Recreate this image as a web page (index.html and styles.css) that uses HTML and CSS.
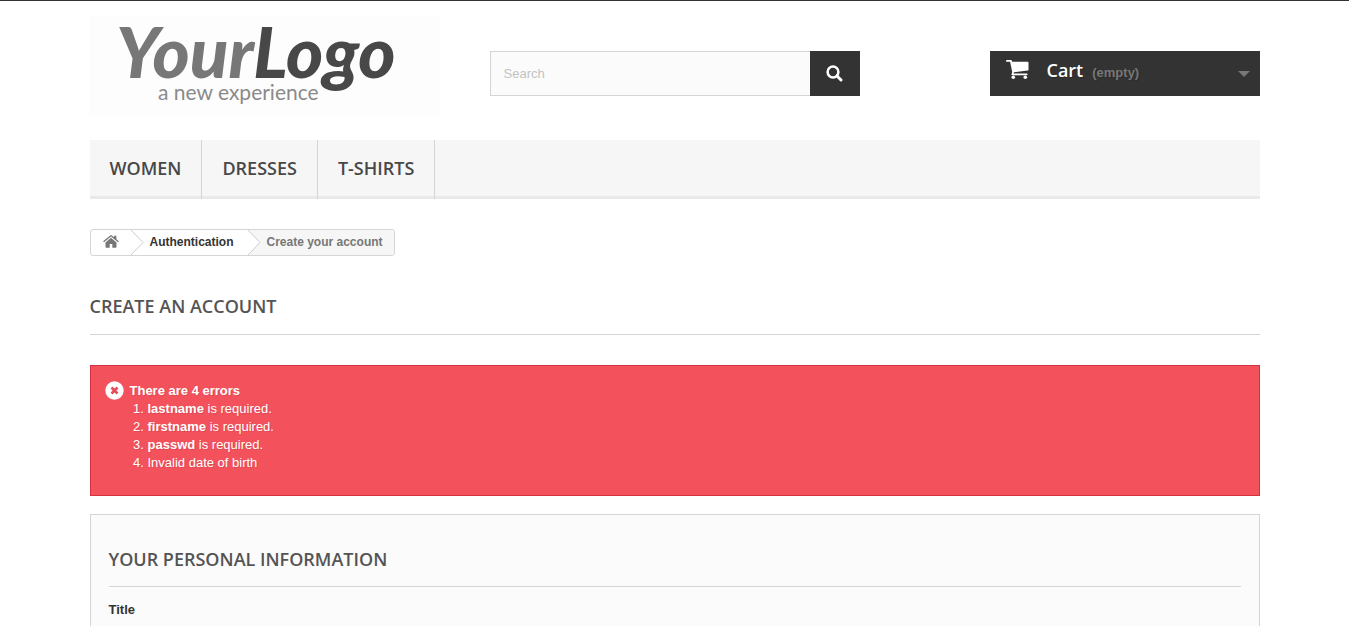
FILE: index.html
```html
<!DOCTYPE html>
<html lang="en">
<head>
<meta charset="utf-8">
<title>Create an account</title>
<link rel="stylesheet" href="styles.css">
</head>
<body>
<header class="header container">
  <a class="logo" href="#" aria-label="YourLogo, a new experience">
    <svg class="logo-art" width="350" height="99" viewBox="0 0 350 99">
      <text class="logo-name" x="26" y="62"><tspan class="logo-your">Your</tspan><tspan class="logo-logo">Logo</tspan></text>
      <text class="logo-tagline" x="68" y="84">a new experience</text>
    </svg>
  </a>
  <form class="search" role="search">
    <input class="search-input" type="search" placeholder="Search" aria-label="Search">
    <button class="search-button" type="button" aria-label="Search">
      <svg width="17" height="17" viewBox="0 0 17 17" fill="none" stroke="#fff"><circle cx="7" cy="7" r="5.4" stroke-width="2.5"/><path d="M11 11l4 4" stroke-width="3" stroke-linecap="round"/></svg>
    </button>
  </form>
  <a class="cart" href="#">
    <svg class="cart-icon" width="23" height="20" viewBox="0 0 23 20" fill="#fff"><path d="M1 0h4c.8 0 1 .8 1.200 1.700H21.700q.8 0 .8.800v7.200q0 .8-.8.900L7.900 12.300l-.3 1.300h13.100q.9 0 .9.800t-.9.800H6.300q-1 0-.8-.9l.7-2.300L4.100 1.800H1Q0 1.800 0 .9T1 0z"/><circle cx="7.300" cy="17.200" r="1.800"/><circle cx="19.300" cy="17.200" r="1.800"/></svg>
    <b class="cart-label">Cart</b>
    <span class="cart-count">(empty)</span>
    <svg class="cart-arrow" width="12" height="6" viewBox="0 0 12 6" fill="#777"><path d="M0 0h12L6 6z"/></svg>
  </a>
</header>
<div class="container">
  <nav class="menu">
    <a class="menu-item" href="#">WOMEN</a>
    <a class="menu-item" href="#">DRESSES</a>
    <a class="menu-item" href="#">T-SHIRTS</a>
  </nav>
  <nav class="breadcrumb" aria-label="Breadcrumb">
    <a class="crumb-home" href="#" aria-label="Home">
      <svg width="16" height="13" viewBox="0 0 16 13" fill="#777"><path d="M8 2.700L13.500 7.400V12q0 .8-.8.800H9.300V9H6.700v3.800H3.300q-.8 0-.8-.8V7.400z"/><path d="M7.200.4q.8-.6 1.600 0l2.300 1.900V.8h2.300v3.400L15.900 6.300l-.9 1L8 1.600l-7 5.700-.9-1z"/></svg>
    </a>
    <svg width="13" height="25" viewBox="0 0 13 25"><path d="M0 0L12 12.500 0 25" fill="#fff" stroke="#ccc"/></svg>
    <a class="crumb-link" href="#">Authentication</a>
    <svg class="crumb-arrow-last" width="13" height="25" viewBox="0 0 13 25"><path d="M0 0L12 12.500 0 25" fill="#fff" stroke="#ccc"/></svg>
    <span class="crumb-current">Create your account</span>
  </nav>
  <main>
    <h1 class="heading">CREATE AN ACCOUNT</h1>
    <section class="alert" role="alert">
      <svg width="19" height="19" viewBox="0 0 19 19"><circle cx="9.500" cy="9.500" r="9.200" fill="#fff"/><path d="M6.500 6.500l6 6M12.500 6.500l-6 6" stroke="#e84a57" stroke-width="2.600"/></svg>
      <div class="alert-body">
        <p class="alert-title">There are 4 errors</p>
        <ol class="alert-list">
          <li><b>lastname</b> is required.</li>
          <li><b>firstname</b> is required.</li>
          <li><b>passwd</b> is required.</li>
          <li>Invalid date of birth</li>
        </ol>
      </div>
    </section>
    <form class="box">
      <h2 class="heading subheading">YOUR PERSONAL INFORMATION</h2>
      <p class="field-label">Title</p>
    </form>
  </main>
</div>
</body>
</html>
```
FILE: styles.css
```css
* { box-sizing: border-box; }
html { overflow: hidden; }
body {
  margin: 0;
  border-top: 1px solid #333;
  background: #fff;
  color: #777;
  font: 13px/18px "Liberation Sans", Arial, sans-serif;
}
a { color: inherit; text-decoration: none; }
.container { width: 100%; max-width: 1200px; margin: 0 auto; padding: 0 15px; }
.header {
  display: grid;
  grid-template-columns: repeat(3, 1fr);
  gap: 30px;
  align-items: start;
  padding-top: 15px;
  padding-bottom: 25px;
}
.logo, .logo-art { display: block; }
.logo-art { overflow: visible; max-width: 100%; background: #fdfdfd; }
.logo-name { font: italic 900 71px "Brush Script MT", Lato, sans-serif; }
.logo-your { fill: #777; }
.logo-logo { fill: #484848; }
.logo-tagline { font: 400 21px Lato, sans-serif; fill: #8a8a8a; }
.search { display: flex; height: 45px; margin-top: 35px; }
.search-input {
  flex: 1;
  min-width: 0;
  padding: 0 13px;
  border: 1px solid #d6d4d4;
  border-right: 0;
  border-radius: 0;
  background: #fbfbfb;
  color: #686666;
  font: inherit;
  appearance: none;
}
.search-input::placeholder { color: #c4c2c2; }
.search-button {
  display: grid;
  place-items: center;
  width: 50px;
  padding: 0;
  border: 0;
  background: #333;
}
.cart {
  display: flex;
  align-items: center;
  justify-self: end;
  width: 270px;
  height: 45px;
  margin-top: 35px;
  padding: 0 10px 0 16px;
  background: #333;
  font-weight: bold;
  text-shadow: 1px 1px rgba(0, 0, 0, 0.2);
}
.cart-icon { margin-bottom: 8px; }
.cart-label {
  margin: 0 9px 8px 18px;
  color: #fff;
  font: 600 18px/22px "Open Sans", sans-serif;
}
.cart-count { margin-bottom: 2px; }
.cart-arrow { margin-left: auto; }
.menu {
  display: flex;
  height: 59px;
  background: linear-gradient(#f6f6f6 56px, #e9e9e9 56px);
}
.menu-item {
  padding: 17px 20px;
  border-right: 1px solid #d6d4d4;
  color: #484848;
  font: 600 18px/22px "Open Sans", sans-serif;
}
.breadcrumb {
  display: flex;
  width: fit-content;
  height: 27px;
  margin-top: 30px;
  overflow: hidden;
  border: 1px solid #d6d4d4;
  border-radius: 3px;
  font-size: 12px;
  font-weight: bold;
  line-height: 24px;
}
.crumb-home { padding: 5px 12px; line-height: 0; }
.crumb-arrow-last, .crumb-current { background: #f6f6f6; }
.crumb-link { padding: 0 14px 0 6px; color: #333; }
.crumb-current { padding: 0 11px 0 6px; }
.heading {
  margin: 39px 0 30px;
  padding-bottom: 17px;
  border-bottom: 1px solid #d6d4d4;
  color: #555454;
  font: 600 18px/22px "Open Sans", sans-serif;
}
.alert {
  display: flex;
  gap: 6px;
  padding: 15px 14px 23px;
  border: 1px solid #d4323d;
  background: #f3515c;
  color: #fff;
  text-shadow: 1px 1px rgba(0, 0, 0, 0.1);
}
.alert-body { padding-top: 1px; }
.alert-title { margin: 0; font-weight: bold; }
.alert-list { margin: 0; padding-left: 18px; }
.box {
  margin-top: 18px;
  padding: 33px 18px 12px;
  border: 1px solid #d6d4d4;
  background: #fbfbfb;
}
.subheading { margin: 0 0 14px; padding-bottom: 16px; }
.field-label { margin: 0; color: #333; font-weight: bold; }
```
